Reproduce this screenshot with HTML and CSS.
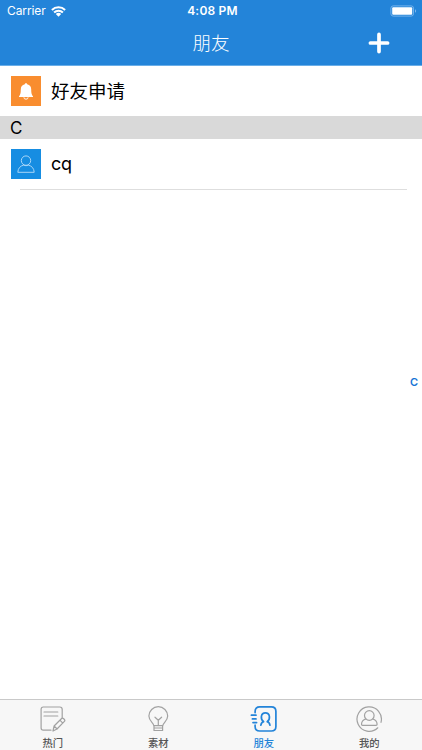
FILE: index.html
```
<!DOCTYPE html>
<html lang="zh-CN">
<head>
  <meta charset="UTF-8" />
  <meta name="viewport" content="width=device-width, initial-scale=1" />
  <title>朋友</title>
  <link rel="stylesheet" href="styles.css">
</head>
<body>
  <!-- HEADER -->
  <header class="header">
    <div class="status-bar">
      <div class="carrier">
        <span>Carrier</span>
        <svg width="15" height="11" viewBox="0 0 15 11">
          <path d="M.9 4a9.3 9.3 0 0 1 13.2 0M3.1 6.5a6.2 6.2 0 0 1 8.8 0" fill="none" stroke="#fff" stroke-width="2"/>
          <path d="M7.5 10.8 4.8 8.1a3.8 3.8 0 0 1 5.4 0z" fill="#fff"/>
        </svg>
      </div>
      <span class="time">4:08 PM</span>
      <div class="battery">
        <svg width="27" height="12" viewBox="0 0 27 12">
          <rect x=".9" y=".9" width="22.6" height="10.2" rx="2.3" fill="none" stroke="#7db8ee" stroke-width=".9"/>
          <rect x="2.2" y="2.2" width="20" height="7.6" rx="1" fill="#fff"/>
          <path d="M25 4.3c1.5.6 1.5 2.8 0 3.4z" fill="#7db8ee"/>
        </svg>
      </div>
    </div>
    <div class="nav-bar">
      <h1>朋友</h1>
      <svg class="add" width="22" height="22" viewBox="0 0 22 22">
        <path d="M11 2.4v17.2M2.4 11h17.2" stroke="#fff" stroke-width="3.7" stroke-linecap="round"/>
      </svg>
    </div>
  </header>

  <!-- FRIEND LIST -->
  <main class="friend-list">
    <div class="row">
      <svg class="avatar request" viewBox="0 0 30 30">
        <path d="M15 7.2c.8 0 1.2.5 1.2 1.1 2.6.6 4 2.6 4 5.1 0 4 .5 5.4 1.8 6.8v.9H8v-.9c1.3-1.4 1.8-2.8 1.8-6.8 0-2.5 1.4-4.5 4-5.1 0-.6.4-1.1 1.2-1.1z" fill="#fff"/>
        <path d="M12.9 21.3a2.1 1.9 0 0 0 4.2 0" fill="none" stroke="#fff" stroke-width=".9"/>
      </svg>
      <span class="name">好友申请</span>
    </div>
    <div class="section">C</div>
    <div class="row">
      <svg class="avatar contact" viewBox="0 0 30 30">
        <g fill="none" stroke="#a9d6f8" stroke-width="1">
          <circle cx="15" cy="11.6" r="4.7"/>
          <path d="M6.8 23.3c.2-4 2.5-6.4 5.7-7.1q2.5 1 5 0c3.2.7 5.5 3.1 5.7 7.1z" stroke-linejoin="round"/>
        </g>
      </svg>
      <span class="name latin">cq</span>
    </div>
    <div class="divider"></div>
    <div class="index">C</div>
  </main>

  <!-- TAB BAR -->
  <nav class="tab-bar">
    <div class="tab">
      <svg width="28" height="28" viewBox="0 0 28 28">
        <path d="M23.2 13V4.4q0-2.4-2.4-2.4H4.2Q2.1 2 2.1 4.2v18.9q0 2.1 2.2 2.1H12M5 7h13.8M5 11h13.8"/>
        <path d="m14 26 1.1-5 7.5-7.5q.9-.9 1.8 0l1 1q.9.9 0 1.8L18 24zM15.1 21l3 3M20.9 15.2l2.9 2.9"/>
      </svg>
      <span>热门</span>
    </div>
    <div class="tab">
      <svg width="28" height="28" viewBox="0 0 28 28">
        <path d="M9.8 20.7c0-2.8-4.9-4.5-4.9-9.6a9.4 9.4 0 0 1 18.8 0c0 5.1-4.9 6.8-4.9 9.6zM10 20.7v4.8h8.6v-4.8M10 23h8.6M14.3 20.5v-5.2l-3.3-3.1M14.3 15.3l3.3-3.1"/>
      </svg>
      <span>素材</span>
    </div>
    <div class="tab active">
      <svg width="28" height="28" viewBox="0 0 28 28">
        <path d="M5.1 7.6V6.5q0-4.6 4.6-4.6h11.6q4.6 0 4.6 4.6v14.9q0 4.6-4.6 4.6H9.7q-4.6 0-4.6-4.6v-1.2M1.4 10.2H6M2.4 13.9H6M3 17.6h3.6"/>
        <path d="M10.9 20.2c.1-1.9 1-3 2.7-3.5-3.5-2.6-2.9-8.9 1.8-8.9s5.3 6.3 1.8 8.9c1.7.5 2.6 1.6 2.7 3.5"/>
      </svg>
      <span>朋友</span>
    </div>
    <div class="tab">
      <svg width="28" height="28" viewBox="0 0 28 28">
        <path d="M22.8 22.8A12.2 12.2 0 1 1 26 17.3"/>
        <circle cx="14.3" cy="10.5" r="4.8"/>
        <path d="M10.9 14c-2.6.7-4.3 2.7-4.4 5.3q0 1 1 1h13.6q1 0 1-1c-.1-2.6-1.8-4.6-4.4-5.3"/>
      </svg>
      <span>我的</span>
    </div>
  </nav>
</body>
</html>
```
FILE: styles.css
```
* {
  box-sizing: border-box;
}
body {
  margin: 0;
  height: 100vh;
  display: flex;
  flex-direction: column;
  overflow: hidden;
  background-color: #fff;
  color: #000;
  font-family: Inter, 'Noto Sans CJK SC', sans-serif;
}
svg {
  display: block;
  flex-shrink: 0;
}

.header {
  height: 66px;
  background-color: #2384d9;
  border-bottom: 1px solid #6aaee8;
  color: #fff;
}
.status-bar {
  height: 22px;
  padding: 0 5px 0 7px;
  display: grid;
  grid-template-columns: 1fr auto 1fr;
  align-items: center;
  font-size: 12px;
  line-height: 22px;
}
.carrier {
  display: flex;
  align-items: center;
  gap: 5px;
  letter-spacing: -0.1px;
}
.time {
  margin-left: 1px;
  font-weight: 600;
  letter-spacing: 0.2px;
}
.battery {
  display: flex;
  justify-content: flex-end;
}
.nav-bar {
  height: 42px;
  padding-right: 32px;
  display: grid;
  grid-template-columns: 1fr auto 1fr;
  align-items: center;
}
.nav-bar h1 {
  grid-column: 2;
  margin: 0 0 0 32px;
  font-size: 18.5px;
  font-weight: 300;
  line-height: 42px;
}
.add {
  justify-self: end;
}

.friend-list {
  flex: 1;
  position: relative;
}
.row {
  height: 50px;
  padding-left: 11px;
  display: flex;
  align-items: center;
  gap: 10px;
}
.avatar {
  width: 30px;
  height: 30px;
}
.request {
  background-color: #f98d2f;
}
.contact {
  background-color: #168de2;
}
.name {
  font-size: 18.5px;
  line-height: 30px;
}
.latin {
  font-size: 18px;
  letter-spacing: -0.4px;
}
.section {
  height: 23px;
  padding-left: 10px;
  background-color: #d9d9d9;
  font-size: 17px;
  line-height: 24px;
}
.divider {
  height: 1px;
  margin: 0 15px 0 20px;
  background-color: #dedede;
}
/* letter index floats over the list */
.index {
  position: absolute;
  top: 308px;
  right: 4px;
  color: #1673d5;
  font-size: 11px;
  font-weight: 600;
  line-height: 17px;
}

.tab-bar {
  height: 51px;
  display: flex;
  background-color: #f7f7f7;
  border-top: 1px solid #c9c9c9;
}
.tab {
  flex: 1;
  padding-top: 5px;
  display: flex;
  flex-direction: column;
  align-items: center;
  color: #555;
  font-size: 10.3px;
  font-weight: 500;
  line-height: 20px;
}
.tab svg {
  fill: none;
  stroke: #a2a2a2;
  stroke-width: 1.2;
  stroke-linecap: round;
  stroke-linejoin: round;
}
.tab.active {
  color: #2384d9;
}
.tab.active svg {
  stroke: #2384d9;
  stroke-width: 1.7;
}
```
